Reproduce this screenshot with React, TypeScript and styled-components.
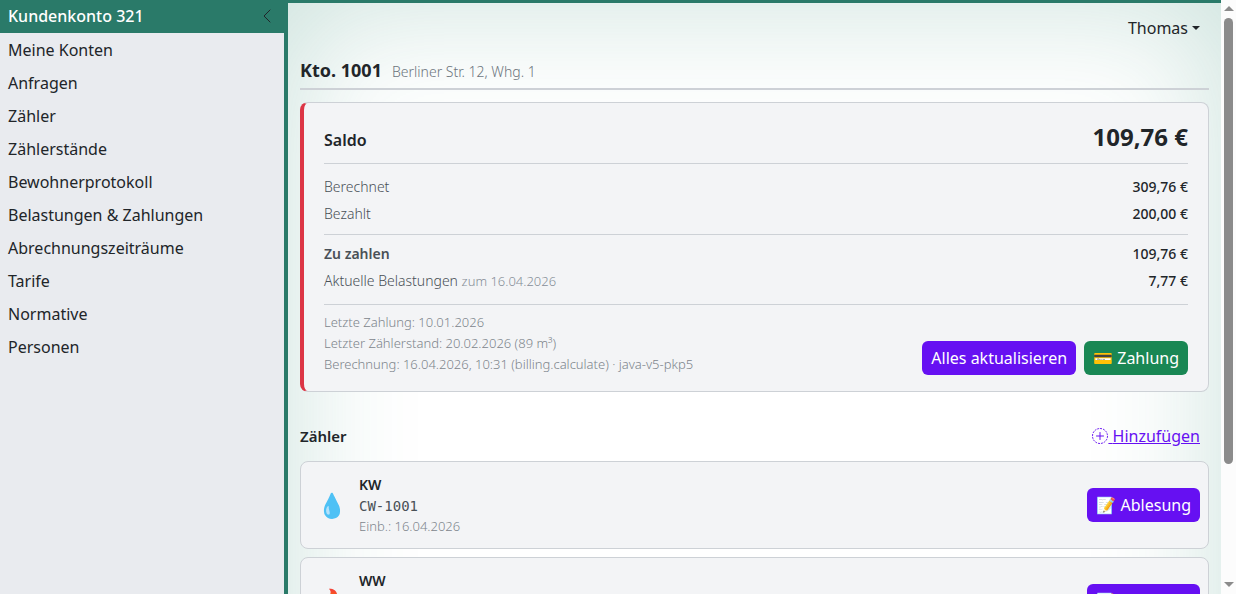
import React from "react";
import styled, { createGlobalStyle } from "styled-components";

const GlobalStyle = createGlobalStyle`
  *, *::before, *::after { box-sizing: border-box; }
  body {
    margin: 0;
    background: #fff;
    color: #212529;
    font: 400 16px/24px "Noto Sans", "Liberation Sans", sans-serif;
  }
  button { font: inherit; cursor: pointer; }
  h1, h2, p, dl, dd, ul { margin: 0; padding: 0; }
`;

const green = "#2a7a69";
const line = "#cdd1d6";
const violet = "#6610f2";

const Shell = styled.div`
  display: flex;
  height: 100vh;
  overflow: hidden;
`;

const Sidebar = styled.aside`
  flex: 0 0 288px;
  background: #e9ebef;
  border-right: 4px solid ${green};
`;

const SidebarHeader = styled.div`
  display: flex;
  align-items: center;
  justify-content: space-between;
  padding: 4px 9px 5px 8px;
  background: ${green};
  color: #fff;
  font-weight: 500;
`;

const CollapseButton = styled.button`
  display: flex;
  padding: 0;
  border: 0;
  background: none;
  color: #212529;
`;

const NavList = styled.ul`
  list-style: none;
`;

const NavLink = styled.a`
  display: block;
  padding: 5px 8px 4px;
  color: #212529;
  text-decoration: none;
`;

const Scroller = styled.main`
  flex: 1;
  min-width: 0;
  overflow-y: auto;
  scrollbar-width: none;
  border-top: 3px solid ${green};
`;

const Page = styled.div`
  min-height: 100%;
  padding: 13px 12px 100px;
  box-shadow: inset 0 0 130px rgba(34, 128, 104, 0.24);
`;

const TopBar = styled.header`
  display: flex;
  justify-content: flex-end;
  padding: 0 9px;
`;

const UserButton = styled.button`
  display: flex;
  align-items: center;
  gap: 4px;
  padding: 0;
  border: 0;
  background: none;
  color: #212529;
`;

const Caret = styled.span`
  border: 4px solid transparent;
  border-top-color: currentColor;
  border-bottom: 0;
`;

const TitleRow = styled.div`
  display: flex;
  align-items: baseline;
  gap: 10px;
  margin: 18px 0 12px;
  padding-bottom: 4px;
  border-bottom: 2px solid ${line};
`;

const Title = styled.h1`
  font-size: 18px;
  line-height: 24px;
  font-weight: 700;
`;

const Address = styled.span`
  font-size: 14px;
  font-weight: 300;
  color: #6c757d;
`;

const Card = styled.section`
  border: 1px solid ${line};
  border-radius: 8px;
  background: #f3f4f6;
`;

const BalanceCard = styled(Card)`
  padding: 16px 20px;
  border-left: 4px solid #dc3545;
`;

const BalanceHead = styled.div`
  display: flex;
  align-items: baseline;
  justify-content: space-between;
  padding-bottom: 8px;
  border-bottom: 1px solid ${line};
`;

const SectionTitle = styled.h2<{ $size?: number }>`
  font-size: ${(p) => p.$size ?? 16}px;
  line-height: 24px;
  font-weight: 600;
`;

const Total = styled.strong`
  font-size: 24px;
  line-height: 36px;
  font-weight: 700;
`;

const Figures = styled.dl<{ $due?: boolean }>`
  padding: ${(p) => (p.$due ? "5px 0 9px" : "9px 0 7px")};
  border-bottom: 1px solid ${line};
`;

const Figure = styled.div`
  display: flex;
  justify-content: space-between;
  font-size: 14px;
  line-height: 27px;
`;

const Label = styled.dt<{ $strong?: boolean }>`
  font-weight: ${(p) => (p.$strong ? 600 : 300)};
  color: #495057;
`;

const Small = styled.small`
  font-size: 13px;
  font-weight: 300;
  color: #868e96;
`;

const Amount = styled.dd`
  font-weight: 500;
`;

const BalanceFoot = styled.div`
  display: flex;
  align-items: flex-end;
  justify-content: space-between;
  padding-top: 7px;
`;

const Notes = styled.div`
  font-size: 13px;
  line-height: 21px;
  font-weight: 300;
  color: #7d858c;
`;

const Actions = styled.div`
  display: flex;
  gap: 8px;
`;

const Button = styled.button<{ $tone?: string }>`
  padding: 4px 8px;
  border: 1px solid transparent;
  border-radius: 6px;
  background: ${(p) => p.$tone ?? violet};
  color: #fff;
  line-height: 24px;
  white-space: nowrap;
`;

const MetersHead = styled.div`
  display: flex;
  align-items: center;
  justify-content: space-between;
  margin: 32px 9px 13px 0;
`;

const AddLink = styled.a`
  color: ${violet};
  svg { vertical-align: -2px; }
`;

const MeterList = styled.div`
  display: grid;
  gap: 8px;
`;

const MeterCard = styled(Card)`
  display: flex;
  align-items: center;
  gap: 12px;
  padding: 12px 8px 13px 16px;
`;

const MeterIcon = styled.span`
  width: 30px;
  font-size: 24px;
  text-align: center;
`;

const MeterText = styled.div`
  flex: 1;
  font-size: 14px;
  line-height: 21px;
`;

const MeterName = styled.div`
  line-height: 22px;
  font-weight: 600;
`;

const Serial = styled.div`
  font-family: "DejaVu Sans Mono", "Liberation Mono", monospace;
  color: #495057;
`;

const Installed = styled.div`
  font-size: 13px;
  line-height: 18px;
  font-weight: 300;
  color: #7d858c;
`;

const ScrollRail = styled.div`
  display: flex;
  flex: 0 0 15px;
  flex-direction: column;
  align-items: center;
  gap: 7px;
  padding: 6px 0 7px;
  background: #fcfcfc;
`;

const RailTrack = styled.div`
  flex: 1;
  width: 9px;
`;

const RailThumb = styled.div`
  height: 80%;
  border-radius: 5px;
  background: #8b8b8b;
`;

const RailArrow = styled.div<{ $down?: boolean }>`
  border-style: solid;
  border-width: ${(p) => (p.$down ? "5px 5px 0" : "0 5px 5px")};
  border-color: ${(p) => (p.$down ? "#8b8b8b transparent transparent" : "transparent transparent #8b8b8b")};
`;

const navItems = [
  "Meine Konten",
  "Anfragen",
  "Zähler",
  "Zählerstände",
  "Bewohnerprotokoll",
  "Belastungen & Zahlungen",
  "Abrechnungszeiträume",
  "Tarife",
  "Normative",
  "Personen",
];

const meters = [
  { icon: "💧", name: "KW", serial: "CW-1001", installed: "16.04.2026" },
  { icon: "🔥", name: "WW", serial: "HW-1001", installed: "16.04.2026" },
];

export default function App() {
  return (
    <>
      <GlobalStyle />
      <Shell>
        <Sidebar>
          <SidebarHeader>
            <span>Kundenkonto 321</span>
            <CollapseButton aria-label="Menü einklappen">
              <svg width="16" height="16" viewBox="0 0 16 16" fill="none" stroke="currentColor" strokeLinecap="round" strokeLinejoin="round">
                <path d="M11 2 5 8l6 6" />
              </svg>
            </CollapseButton>
          </SidebarHeader>
          <nav>
            <NavList>
              {navItems.map((item) => (
                <li key={item}>
                  <NavLink href="#">{item}</NavLink>
                </li>
              ))}
            </NavList>
          </nav>
        </Sidebar>
        <Scroller>
          <Page>
            <TopBar>
              <UserButton>
                Thomas <Caret />
              </UserButton>
            </TopBar>
            <TitleRow>
              <Title>Kto. 1001</Title>
              <Address>Berliner Str. 12, Whg. 1</Address>
            </TitleRow>
            <BalanceCard>
              <BalanceHead>
                <SectionTitle>Saldo</SectionTitle>
                <Total>109,76 €</Total>
              </BalanceHead>
              <Figures>
                <Figure>
                  <Label>Berechnet</Label>
                  <Amount>309,76 €</Amount>
                </Figure>
                <Figure>
                  <Label>Bezahlt</Label>
                  <Amount>200,00 €</Amount>
                </Figure>
              </Figures>
              <Figures $due>
                <Figure>
                  <Label $strong>Zu zahlen</Label>
                  <Amount>109,76 €</Amount>
                </Figure>
                <Figure>
                  <Label>
                    Aktuelle Belastungen <Small>zum 16.04.2026</Small>
                  </Label>
                  <Amount>7,77 €</Amount>
                </Figure>
              </Figures>
              <BalanceFoot>
                <Notes>
                  <p>Letzte Zahlung: 10.01.2026</p>
                  <p>Letzter Zählerstand: 20.02.2026 (89 m³)</p>
                  <p>Berechnung: 16.04.2026, 10:31 (billing.calculate) · java-v5-pkp5</p>
                </Notes>
                <Actions>
                  <Button>Alles aktualisieren</Button>
                  <Button $tone="#198754">💳 Zahlung</Button>
                </Actions>
              </BalanceFoot>
            </BalanceCard>
            <MetersHead>
              <SectionTitle $size={15}>Zähler</SectionTitle>
              <AddLink href="#">
                <svg width="16" height="16" viewBox="0 0 16 16" fill="none" stroke="currentColor">
                  <circle cx="8" cy="8" r="7.5" strokeDasharray="1.9 1.04" />
                  <path d="M8 4.5v7M4.5 8h7" strokeLinecap="round" />
                </svg>{" "}
                Hinzufügen
              </AddLink>
            </MetersHead>
            <MeterList>
              {meters.map((m) => (
                <MeterCard key={m.name}>
                  <MeterIcon>{m.icon}</MeterIcon>
                  <MeterText>
                    <MeterName>{m.name}</MeterName>
                    <Serial>{m.serial}</Serial>
                    <Installed>Einb.: {m.installed}</Installed>
                  </MeterText>
                  <Button>📝 Ablesung</Button>
                </MeterCard>
              ))}
            </MeterList>
          </Page>
        </Scroller>
        <ScrollRail aria-hidden="true">
          <RailArrow />
          <RailTrack>
            <RailThumb />
          </RailTrack>
          <RailArrow $down />
        </ScrollRail>
      </Shell>
    </>
  );
}
